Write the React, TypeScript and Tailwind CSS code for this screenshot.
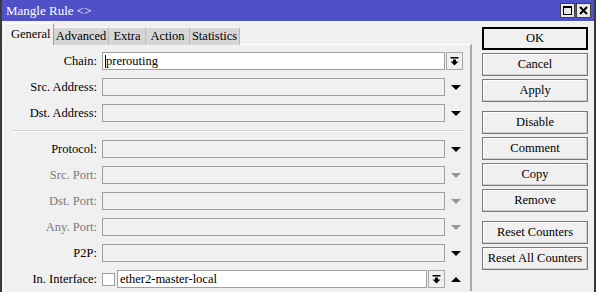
import React from "react"

function Tri({ up, gray }: { up?: boolean; gray?: boolean }) {
  return (
    <svg width="10" height="5" viewBox="0 0 10 5" className={up ? "rotate-180" : ""}>
      <path d="M0 0 H10 L5 5 Z" fill={gray ? "#939b93" : "#000"} />
    </svg>
  )
}

function DropBtn() {
  return (
    <div className="w-[17px] h-[18px] border border-[#a8a8a8] bg-[#f0f0f0] flex items-center justify-center">
      <svg width="9" height="9" viewBox="0 0 9 9">
        <rect x="0.5" y="0" width="8" height="1.5" fill="#000" />
        <path d="M3 2.5 H6 V4.5 H8.5 L4.5 8.5 L0.5 4.5 H3 Z" fill="#000" />
      </svg>
    </div>
  )
}

function Row({
  label,
  disabled,
  value,
  arrow = "down",
}: {
  label: string
  disabled?: boolean
  value?: string
  arrow?: "down" | "btn"
}) {
  return (
    <div className="flex items-center h-[18px]">
      <div className={`w-[93px] text-right ${disabled ? "text-[#7a7a7a]" : "text-black"}`}>{label}</div>
      <div
        className={`ml-[5px] w-[343px] h-[18px] border border-[#a0a0a0] flex items-center pl-[2px] ${
          value !== undefined ? "bg-white" : "bg-[#f0f0f0]"
        }`}
      >
        {value !== undefined && (
          <>
            <span className="w-[1px] h-[13px] bg-black" />
            {value}
          </>
        )}
      </div>
      {arrow === "btn" ? (
        <div className="ml-[1px]">
          <DropBtn />
        </div>
      ) : (
        <div className="w-[21px] flex items-center justify-center">
          <Tri gray={disabled} />
        </div>
      )}
    </div>
  )
}

function Btn({ children, def }: { children: React.ReactNode; def?: boolean }) {
  return (
    <div
      className={`h-[23px] w-[106px] flex items-center justify-center bg-[#f0f0f0] ${
        def
          ? "border-2 border-black"
          : "border border-[#7a7a7a] shadow-[inset_-1px_-1px_0_#cfcfcf,inset_1px_1px_0_#ffffff]"
      }`}
    >
      {children}
    </div>
  )
}

export default function App() {
  const tabs: [string, string][] = [
    ["General", "w-[50px]"],
    ["Advanced", "w-[55px]"],
    ["Extra", "w-[37px]"],
    ["Action", "w-[44px]"],
    ["Statistics", "w-[50px]"],
  ]
  return (
    <div className="w-[596px] h-[292px] overflow-hidden bg-[#f0f0f0] border-x-2 border-[#3a3a3a] text-[12.5px] leading-none font-['Liberation_Serif','DejaVu_Serif',serif]">
      <div className="h-[21px] bg-[#5050c9] flex items-center justify-between pl-[4px] pr-[3px]">
        <span className="text-white text-[13px]">Mangle Rule &lt;&gt;</span>
        <div className="flex gap-[1px]">
          <div className="w-[15px] h-[15px] bg-[#e8e8e8] border border-[#404040] flex items-center justify-center">
            <div className="w-[9px] h-[9px] border border-black border-t-2" />
          </div>
          <div className="w-[15px] h-[15px] bg-[#e8e8e8] border border-[#404040] flex items-center justify-center">
            <svg width="9" height="9" viewBox="0 0 9 9">
              <path d="M1 1 L8 8 M8 1 L1 8" stroke="#000" strokeWidth="2" />
            </svg>
          </div>
        </div>
      </div>
      <div className="h-[1px] bg-[#f8f8f8]" />
      <div className="flex">
        <div className="w-[470px] pl-[1px] pt-[1px]">
          <div className="flex items-end h-[22px] ml-[1px]">
            {tabs.map(([t, w], i) => (
              <div
                key={t}
                className={`${w} ${
                  i === 0
                    ? "h-[22px] pl-[6px] flex items-center bg-[#f0f0f0] border-t border-l border-white border-r border-r-[#a0a0a0] relative z-10"
                    : "h-[18px] flex items-center justify-center bg-[#d6d6d6] border-t border-r border-[#bcbcbc] border-t-[#fafafa]"
                }`}
              >
                {t}
              </div>
            ))}
          </div>
          <div className="h-[247px] border-t border-l border-white border-r-2 border-r-[#a8a8a8] -mt-[1px] pt-[7px] flex flex-col gap-[8px]">
            <Row label="Chain:" value="prerouting" arrow="btn" />
            <Row label="Src. Address:" />
            <Row label="Dst. Address:" />
            <div className="h-[2px] ml-[8px] mr-[6px] border-t border-[#d6d6d6] border-b border-b-white" />
            <Row label="Protocol:" />
            <Row label="Src. Port:" disabled />
            <Row label="Dst. Port:" disabled />
            <Row label="Any. Port:" disabled />
            <Row label="P2P:" />
            <div className="flex items-center h-[18px]">
              <div className="w-[93px] text-right">In. Interface:</div>
              <div className="ml-[5px] w-[13px] h-[13px] border border-[#a0a0a0] bg-white" />
              <div className="ml-[2px] w-[310px] h-[18px] border border-[#a0a0a0] bg-white flex items-center pl-[2px]">
                ether2-master-local
              </div>
              <div className="ml-[1px]">
                <DropBtn />
              </div>
              <div className="w-[22px] flex items-center justify-center">
                <Tri up />
              </div>
            </div>
          </div>
        </div>
        <div className="pl-[10px] pt-[5px] flex flex-col gap-[3px]">
          <Btn def>OK</Btn>
          <Btn>Cancel</Btn>
          <Btn>Apply</Btn>
          <div className="h-[3px]" />
          <Btn>Disable</Btn>
          <Btn>Comment</Btn>
          <Btn>Copy</Btn>
          <Btn>Remove</Btn>
          <div className="h-[3px]" />
          <Btn>Reset Counters</Btn>
          <Btn>Reset All Counters</Btn>
        </div>
      </div>
    </div>
  )
}
